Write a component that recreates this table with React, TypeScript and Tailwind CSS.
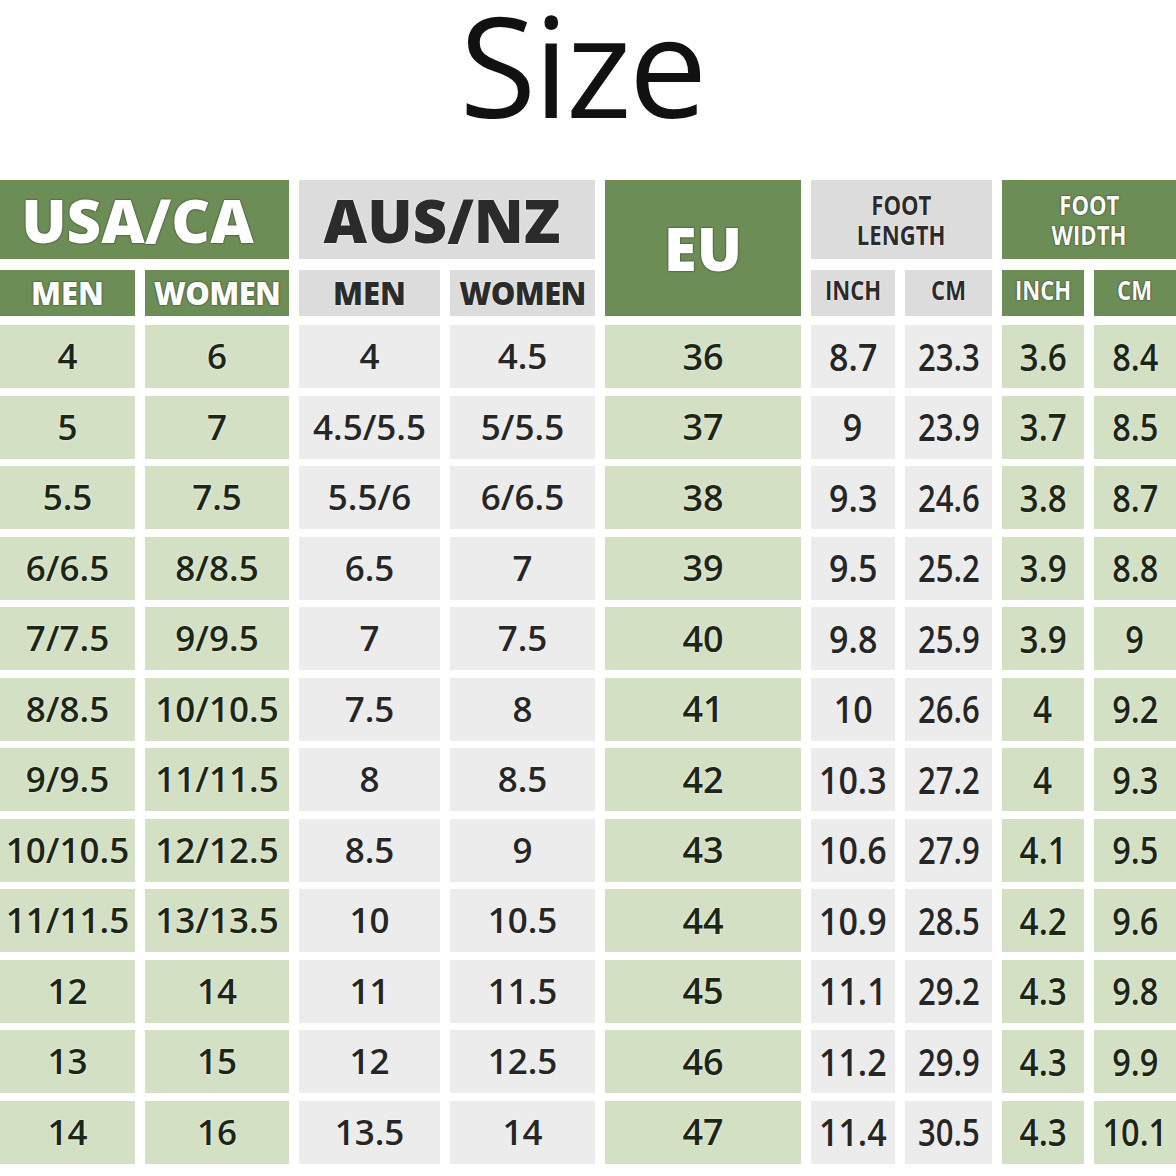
import React from "react"

const rows = [
  ["4", "6", "4", "4.5", "36", "8.7", "23.3", "3.6", "8.4"],
  ["5", "7", "4.5/5.5", "5/5.5", "37", "9", "23.9", "3.7", "8.5"],
  ["5.5", "7.5", "5.5/6", "6/6.5", "38", "9.3", "24.6", "3.8", "8.7"],
  ["6/6.5", "8/8.5", "6.5", "7", "39", "9.5", "25.2", "3.9", "8.8"],
  ["7/7.5", "9/9.5", "7", "7.5", "40", "9.8", "25.9", "3.9", "9"],
  ["8/8.5", "10/10.5", "7.5", "8", "41", "10", "26.6", "4", "9.2"],
  ["9/9.5", "11/11.5", "8", "8.5", "42", "10.3", "27.2", "4", "9.3"],
  ["10/10.5", "12/12.5", "8.5", "9", "43", "10.6", "27.9", "4.1", "9.5"],
  ["11/11.5", "13/13.5", "10", "10.5", "44", "10.9", "28.5", "4.2", "9.6"],
  ["12", "14", "11", "11.5", "45", "11.1", "29.2", "4.3", "9.8"],
  ["13", "15", "12", "12.5", "46", "11.2", "29.9", "4.3", "9.9"],
  ["14", "16", "13.5", "14", "47", "11.4", "30.5", "4.3", "10.1"],
]

const green = "bg-[#d4e0c4] text-[#1c2616] [text-shadow:0_0_2px_#ffffff]"
const gray = "bg-[#ececec] text-[#262626] [text-shadow:0_0_2px_#ffffff]"

// background + text scaling for each column
const cellBg = [green, green, gray, gray, green, gray, gray, green, green]
const textFit = [
  "text-[35px]",
  "text-[35px]",
  "text-[35px]",
  "text-[35px]",
  "text-[36px]",
  "text-[37px] scale-x-[0.92]",
  "text-[37px] scale-x-[0.84]",
  "text-[37px] scale-x-[0.9]",
  "text-[37px] scale-x-[0.88]",
]

const cols = "grid grid-cols-[135px_144px_141px_145px_196px_84px_87px_82px_82px] gap-x-[10px]"
const darkHead = "bg-[#6c8d56] text-white [text-shadow:0_0_2px_#2f3d26,0_0_1px_#2f3d26]"
const lightHead = "bg-[#dcdcdc] text-[#2b2b2b] [text-shadow:0_0_2px_#ffffff,0_0_1px_#ffffff]"

export default function App() {
  return (
    <div className="w-[1176px] h-[1176px] bg-white overflow-hidden font-['Open_Sans',sans-serif]">
      {/* Title */}
      <div className="h-[180px] text-center pr-[12px] text-[140px] leading-[128px] tracking-[-0.02em] text-[#111]">
        Size
      </div>

      {/* Header */}
      <div className={`${cols} grid-rows-[79px_46px] gap-y-[11px] font-extrabold`}>
        <div className={`col-span-2 flex items-center justify-center pr-[14px] text-[60px] ${darkHead}`}>USA/CA</div>
        <div className={`col-span-2 flex items-center justify-center pr-[10px] text-[60px] ${lightHead}`}>AUS/NZ</div>
        <div className={`row-span-2 flex items-center justify-center text-[60px] ${darkHead}`}>EU</div>
        <div className={`col-span-2 flex flex-col items-center justify-center text-[26px] leading-[30px] font-bold ${lightHead}`}>
          <span className="scale-x-[0.85]">FOOT</span>
          <span className="scale-x-[0.85]">LENGTH</span>
        </div>
        <div className={`col-span-2 flex flex-col items-center justify-center text-[26px] leading-[30px] font-bold ${darkHead}`}>
          <span className="scale-x-[0.85]">FOOT</span>
          <span className="scale-x-[0.85]">WIDTH</span>
        </div>

        <div className={`flex items-center justify-center text-[31px] ${darkHead}`}>MEN</div>
        <div className={`flex items-center justify-center text-[31px] tracking-[-0.02em] ${darkHead}`}>WOMEN</div>
        <div className={`flex items-center justify-center text-[31px] ${lightHead}`}>MEN</div>
        <div className={`flex items-center justify-center text-[31px] tracking-[-0.02em] ${lightHead}`}>WOMEN</div>
        <div className={`flex items-center justify-center pb-[6px] text-[26px] font-bold ${lightHead}`}>
          <span className="scale-x-[0.85]">INCH</span>
        </div>
        <div className={`flex items-center justify-center pb-[6px] text-[26px] font-bold ${lightHead}`}>
          <span className="scale-x-[0.85]">CM</span>
        </div>
        <div className={`flex items-center justify-center pb-[6px] text-[26px] font-bold ${darkHead}`}>
          <span className="scale-x-[0.85]">INCH</span>
        </div>
        <div className={`flex items-center justify-center pb-[6px] text-[26px] font-bold ${darkHead}`}>
          <span className="scale-x-[0.85]">CM</span>
        </div>
      </div>

      {/* Size rows */}
      <div className={`${cols} auto-rows-[63px] gap-y-[7.5px] mt-[9px] font-semibold`}>
        {rows.map((row, r) =>
          row.map((value, c) => (
            <div key={`${r}-${c}`} className={`flex items-center justify-center whitespace-nowrap ${cellBg[c]}`}>
              <span className={`inline-block ${textFit[c]}`}>{value}</span>
            </div>
          ))
        )}
      </div>
    </div>
  )
}
